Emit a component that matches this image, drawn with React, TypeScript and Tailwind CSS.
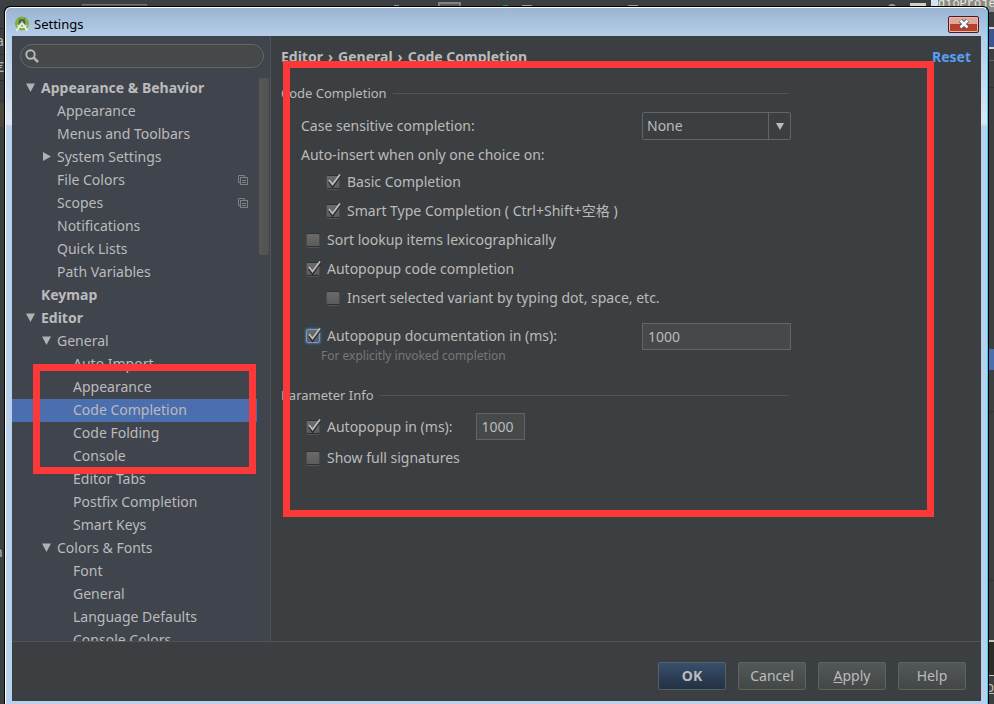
import { useState } from 'react';
import type { ReactNode } from 'react';
import clsx from 'clsx';

interface TreeNode {
  label: string;
  depth: 0 | 1 | 2;
  arrow?: 'open' | 'closed';
  bold?: boolean;
  shared?: boolean;
}

const treeNodes: TreeNode[] = [
  { label: 'Appearance & Behavior', depth: 0, arrow: 'open', bold: true },
  { label: 'Appearance', depth: 1 },
  { label: 'Menus and Toolbars', depth: 1 },
  { label: 'System Settings', depth: 1, arrow: 'closed' },
  { label: 'File Colors', depth: 1, shared: true },
  { label: 'Scopes', depth: 1, shared: true },
  { label: 'Notifications', depth: 1 },
  { label: 'Quick Lists', depth: 1 },
  { label: 'Path Variables', depth: 1 },
  { label: 'Keymap', depth: 0, bold: true },
  { label: 'Editor', depth: 0, arrow: 'open', bold: true },
  { label: 'General', depth: 1, arrow: 'open' },
  { label: 'Auto Import', depth: 2 },
  { label: 'Appearance', depth: 2 },
  { label: 'Code Completion', depth: 2 },
  { label: 'Code Folding', depth: 2 },
  { label: 'Console', depth: 2 },
  { label: 'Editor Tabs', depth: 2 },
  { label: 'Postfix Completion', depth: 2 },
  { label: 'Smart Keys', depth: 2 },
  { label: 'Colors & Fonts', depth: 1, arrow: 'open' },
  { label: 'Font', depth: 2 },
  { label: 'General', depth: 2 },
  { label: 'Language Defaults', depth: 2 },
  { label: 'Console Colors', depth: 2 },
];

const indent = {
  0: 'pl-[14px]',
  1: 'pl-[30px]',
  2: 'pl-[46px]',
};

function StudioLogo() {
  return (
    <svg className="size-4" viewBox="0 0 16 16" aria-hidden="true">
      <circle cx="8" cy="7.5" r="7" fill="#7cb342" />
      <path d="M4.6 6.5a3.4 3.4 0 0 1 6.8 0v1.2H4.6z" fill="#4f5f55" />
      <path d="M5.3 2.2l1 1.6M10.7 2.2l-1 1.6" stroke="#4f5f55" strokeWidth="0.8" />
      <path d="M7.4 7.5L3 14.2M8.6 7.5l4.4 6.7" stroke="#eef0ea" strokeWidth="1.8" strokeLinecap="round" />
      <path d="M3.2 9.6q4.8 3.8 9.6 0" stroke="#eef0ea" strokeWidth="1.3" fill="none" />
      <circle cx="8" cy="6.4" r="1.1" fill="#c5ccc6" />
    </svg>
  );
}

function Arrow({ type }: { type?: 'open' | 'closed' }) {
  return (
    <svg className="w-[9px] h-[9px] shrink-0" viewBox="0 0 9 9" fill="#afb1b3" aria-hidden="true">
      {type === 'open' && <path d="M0 0.5h9L4.5 9z" />}
      {type === 'closed' && <path d="M1 0v9L9 4.5z" />}
    </svg>
  );
}

function SharedIcon() {
  return (
    <svg className="w-[10px] h-[10px]" viewBox="0 0 10 10" fill="none" stroke="#7b8084" aria-hidden="true">
      <path d="M2 7.5H0.5v-7h6V2" />
      <rect x="2.5" y="2.5" width="7" height="7" />
      <path d="M4 5.5h4M4 7.5h4" />
    </svg>
  );
}

function Checkbox({ label, checked = false, focused = false }: { label: ReactNode; checked?: boolean; focused?: boolean }) {
  return (
    <label className="flex items-center gap-[7px] whitespace-nowrap">
      <span className="relative block size-[14px]">
        <input
          type="checkbox"
          defaultChecked={checked}
          className={clsx(
            'peer block size-[14px] appearance-none rounded-xs border bg-linear-to-b from-[#6a6a6a] to-[#5c5c5c] outline-none',
            focused
              ? 'border-[#6d9ccf] shadow-[0_0_2px_1px_#466d94]'
              : 'border-[#4a4a4a] border-t-[#303233] border-b-[#2d2f30] shadow-[0_1px_0_#525557]'
          )}
        />
        <svg
          className="pointer-events-none invisible absolute -top-[2px] left-0 w-4 h-4 peer-checked:visible"
          viewBox="0 0 16 16"
          fill="none"
          aria-hidden="true"
        >
          <path d="M3 8.5l3.5 5L14.5 2.5" stroke="#2b2b2b" strokeWidth="2.2" />
          <path d="M3 7l3.5 4.5L14 1.5" stroke="#bcbcbc" strokeWidth="1.8" />
        </svg>
      </span>
      {label}
    </label>
  );
}

function SectionTitle({ children }: { children: ReactNode }) {
  return (
    <div className="mr-[2px] flex h-[18px] items-center gap-[6px] text-[13px]">
      <h2>{children}</h2>
      <div className="h-px flex-1 bg-[#515456]" />
    </div>
  );
}

// Parts of the IDE window that stay visible around the dialog
function Backdrop() {
  return (
    <div className="absolute inset-0 overflow-hidden text-[#bbbbbb]" aria-hidden="true">
      <div className="absolute left-[82px] top-1 h-2 w-[65px] border border-[#707375] bg-[#55585a]" />
      <div className="absolute left-[438px] top-[2px] h-2 w-[23px] border-2 border-[#808385] bg-[#55585a]" />
      <div className="absolute left-[394px] top-[5px] h-px w-[5px] bg-[#6f9fc0]" />
      <div className="absolute left-[503px] top-[5px] h-px w-[5px] bg-[#1f9860]" />
      <div className="absolute left-[522px] top-[5px] h-px w-[10px] bg-[#9a9a9a]" />
      <div className="absolute left-[628px] top-[5px] h-px w-[10px] bg-[#9a9a9a]" />
      <div className="absolute right-[98px] top-1 h-2 w-2 rounded-full bg-[#9a9a9a]" />
      <div className="absolute right-[68px] top-[3px] h-[3px] w-4 bg-[#d0d0c8]" />
      <div className="absolute right-0 top-0 h-3 w-[63px] overflow-hidden border-l-[7px] border-[#d5e2f2] bg-[#8a8a8a]">
        <span className="block font-['Liberation_Mono'] text-xs leading-[8px] text-[#ece8d8]">dioProje</span>
      </div>
      <div className="absolute right-0 top-[27px] h-[22px] w-[6px] border-y-2 border-[#d0d0c8] bg-[#3a5591]" />
      <div className="absolute right-0 top-[60px] h-7 w-[6px] border-y border-[#2f3132] border-t-[#626466]" />
      <div className="absolute right-0 top-[349px] h-[21px] w-[6px] bg-[#4b6eaf]" />
      <div className="absolute right-0 top-[411px] h-[170px] w-[6px] border-y border-[#2f3132]" />
      <div className="absolute right-0 top-[640px] h-9 w-[6px] border-t-2 border-b border-[#c8c5b8] bg-[#2d2b28]" />
      <span className="absolute right-0 top-[679px] text-sm leading-4 underline">p</span>
      <span className="absolute -left-[4px] top-[33px] text-sm leading-4">a</span>
      <span className="absolute -left-[4px] top-[59px] text-sm leading-4">€</span>
      <span className="absolute -left-[6px] top-[544px] text-sm leading-4">n</span>
      <div className="absolute left-0 top-[28px] h-px w-4 bg-[#2b2d2e]" />
      <div className="absolute left-0 top-[54px] h-px w-4 bg-[#2b2d2e]" />
      <div className="absolute left-0 top-[80px] h-px w-4 bg-[#2b2d2e]" />
      <div className="absolute left-0 top-[103px] h-6 w-4 bg-[#49473e]" />
    </div>
  );
}

function TitleBar() {
  return (
    <header className="flex h-7 shrink-0 items-center gap-1 bg-linear-to-b from-[#9ab4d2] to-[#b5cde8] pt-1 pl-2 pr-2 text-black">
      <StudioLogo />
      <h1 className="flex-1 text-[13px] leading-4">Settings</h1>
      <button
        type="button"
        aria-label="Close"
        className="flex h-[17px] w-[31px] items-center justify-center rounded-xs border border-[#4d1a22] bg-linear-to-b from-[#e0a79d] from-45% to-[#b8402a] to-50% inset-ring inset-ring-[#e9b9ae]"
      >
        <svg className="w-3 h-[10px]" viewBox="0 0 12 10" aria-hidden="true">
          <path d="M2.5 1.5l7 7M9.5 1.5l-7 7" stroke="#4a4f5e" strokeWidth="4.4" />
          <path d="M2.5 1.5l7 7M9.5 1.5l-7 7" stroke="#f7f7f7" strokeWidth="2.6" />
        </svg>
      </button>
    </header>
  );
}

function Sidebar() {
  const [selected, setSelected] = useState(14);

  return (
    <aside className="relative flex w-[259px] shrink-0 flex-col overflow-hidden border-r border-[#515355] bg-[#40444d] pt-2">
      <div className="mx-2 mr-[6px] flex h-6 shrink-0 items-center rounded-full border border-[#646769] bg-[#45494a] pl-1">
        <svg className="w-[14px] h-[14px]" viewBox="0 0 14 14" fill="none" stroke="#b4b6b8" aria-hidden="true">
          <circle cx="5.5" cy="5.5" r="4.2" strokeWidth="2" />
          <path d="M8.7 8.7l4.3 4.3" strokeWidth="2.6" />
        </svg>
        <input type="text" aria-label="Search settings" className="min-w-0 flex-1 bg-transparent px-1 outline-none" />
      </div>
      <div className="mt-[9px] flex min-h-0 flex-1">
        <ul className="flex-1 overflow-hidden">
          {treeNodes.map((node, i) => (
            <li key={i}>
              <button
                type="button"
                onClick={() => setSelected(i)}
                className={clsx(
                  'flex h-[23px] w-full items-center gap-[6px] pb-[2px] pr-[9px] text-left whitespace-nowrap',
                  indent[node.depth],
                  node.bold && 'font-bold',
                  i === selected && 'bg-[#4b6eaf]'
                )}
              >
                <Arrow type={node.arrow} />
                <span className="flex-1">{node.label}</span>
                {node.shared && <SharedIcon />}
              </button>
            </li>
          ))}
        </ul>
        <div className="w-[13px] pl-[2px] pt-px">
          <div className="h-[177px] w-[10px] rounded-xs bg-linear-to-r from-[#585858] to-[#505050]" />
        </div>
      </div>
      <div className="pointer-events-none absolute left-[21px] top-[328px] h-[110px] w-[223px] border-[7px] border-[#fc3838]" />
    </aside>
  );
}

function CompletionSettings() {
  return (
    <main className="relative min-w-0 flex-1 overflow-hidden px-[10px] pt-[10px]">
      <div className="flex h-[22px] items-center justify-between font-bold">
        <nav aria-label="Breadcrumb" className="flex gap-[5px]">
          <span>Editor</span>
          <span>›</span>
          <span>General</span>
          <span>›</span>
          <span>Code Completion</span>
        </nav>
        <a href="#reset" className="text-[#589df6]">
          Reset
        </a>
      </div>

      <form className="mt-4 max-w-[510px]">
        <SectionTitle>Code Completion</SectionTitle>
        <div className="mt-[10px] flex h-7 items-center justify-between pl-5">
          <label htmlFor="case-sensitive">Case sensitive completion:</label>
          <div className="relative h-7 w-[149px]">
            <select
              id="case-sensitive"
              className="h-full w-full appearance-none rounded-xs border border-[#646464] bg-[#3c3f41] pl-1 outline-none"
            >
              <option>None</option>
              <option>First letter</option>
              <option>All</option>
            </select>
            <div className="pointer-events-none absolute inset-y-0 right-0 flex w-[23px] items-center justify-center border-l border-[#646464]">
              <svg className="w-2 h-[7px]" viewBox="0 0 8 7" fill="#bbbbbb" aria-hidden="true">
                <path d="M0 0h8L4 7z" />
              </svg>
            </div>
          </div>
        </div>
        <p className="flex h-7 items-center pt-[2px] pl-5">Auto-insert when only one choice on:</p>
        <div className="flex h-[29px] items-center pb-[2px] pl-[45px]">
          <Checkbox label="Basic Completion" checked />
        </div>
        <div className="flex h-[29px] items-center pb-[2px] pl-[45px]">
          <Checkbox label="Smart Type Completion ( Ctrl+Shift+空格 )" checked />
        </div>
        <div className="flex h-[29px] items-center pb-[2px] pl-[25px]">
          <Checkbox label="Sort lookup items lexicographically" />
        </div>
        <div className="flex h-[29px] items-center pb-[2px] pl-[25px]">
          <Checkbox label="Autopopup code completion" checked />
        </div>
        <div className="flex h-[29px] items-center pb-[2px] pl-[45px]">
          <Checkbox label="Insert selected variant by typing dot, space, etc." />
        </div>
        <div className="mt-[10px] flex h-[27px] items-center justify-between pl-[25px]">
          <div className="pb-[2px]">
            <Checkbox label="Autopopup documentation in (ms):" checked focused />
          </div>
          <input
            type="text"
            aria-label="Documentation delay in milliseconds"
            defaultValue="1000"
            className="h-[27px] w-[149px] border border-[#646464] bg-[#45494a] px-[5px] outline-none"
          />
        </div>
        <p className="-mt-[2px] pl-10 text-xs leading-4 text-[#777777]">For explicitly invoked completion</p>

        <div className="mt-[22px]">
          <SectionTitle>Parameter Info</SectionTitle>
        </div>
        <div className="mt-[9px] flex h-[27px] items-center gap-[23px] pl-[25px]">
          <Checkbox label="Autopopup in (ms):" checked />
          <input
            type="text"
            aria-label="Parameter info delay in milliseconds"
            defaultValue="1000"
            className="h-[27px] w-[49px] border border-[#646464] bg-[#45494a] px-[5px] outline-none"
          />
        </div>
        <div className="mt-1 flex h-[29px] items-center pb-[2px] pl-[25px]">
          <Checkbox label="Show full signatures" />
        </div>
      </form>
      <div className="pointer-events-none absolute left-3 right-[47px] top-[25px] h-[456px] border-[7px] border-[#fc3838]" />
    </main>
  );
}

const buttonClass =
  'h-7 w-[68px] rounded-xs border border-[#5e6264] bg-linear-to-b from-[#525758] to-[#434748]';

function Footer() {
  return (
    <footer className="flex shrink-0 justify-end gap-3 border-t border-[#515355] pt-5 pr-[15px] pb-[11px]">
      <button
        type="button"
        className="h-7 w-[68px] rounded-xs border border-[#55606b] bg-linear-to-b from-[#384f6b] to-[#233143] font-bold"
      >
        OK
      </button>
      <button type="button" className={buttonClass}>
        Cancel
      </button>
      <button type="button" className={buttonClass}>
        <span className="underline">A</span>pply
      </button>
      <button type="button" className={buttonClass}>
        Help
      </button>
    </footer>
  );
}

export default function App() {
  return (
    <div className="relative flex h-screen overflow-hidden bg-[#3c3f41] pt-[6px] pr-[5px] pl-1 font-['Noto_Sans','Noto_Sans_CJK_SC',sans-serif] text-sm text-[#bbbbbb]">
      <Backdrop />
      <div className="relative flex min-w-0 flex-1 rounded-t-md border border-b-0 border-black">
        <div className="flex min-w-0 flex-1 flex-col overflow-hidden rounded-t-md border border-b-0 border-white border-r-[#3fd0e8] bg-[#b9d1ea]">
          <TitleBar />
          <div className="flex min-h-0 flex-1 flex-col bg-[linear-gradient(#b5cde8,#dce7f3_88px,#b9d1ea_90px)] px-[6px] pb-[3px]">
            <div className="flex min-h-0 flex-1 flex-col bg-[#3c3f41]">
              <div className="flex min-h-0 flex-1">
                <Sidebar />
                <CompletionSettings />
              </div>
              <Footer />
            </div>
          </div>
        </div>
      </div>
    </div>
  );
}
